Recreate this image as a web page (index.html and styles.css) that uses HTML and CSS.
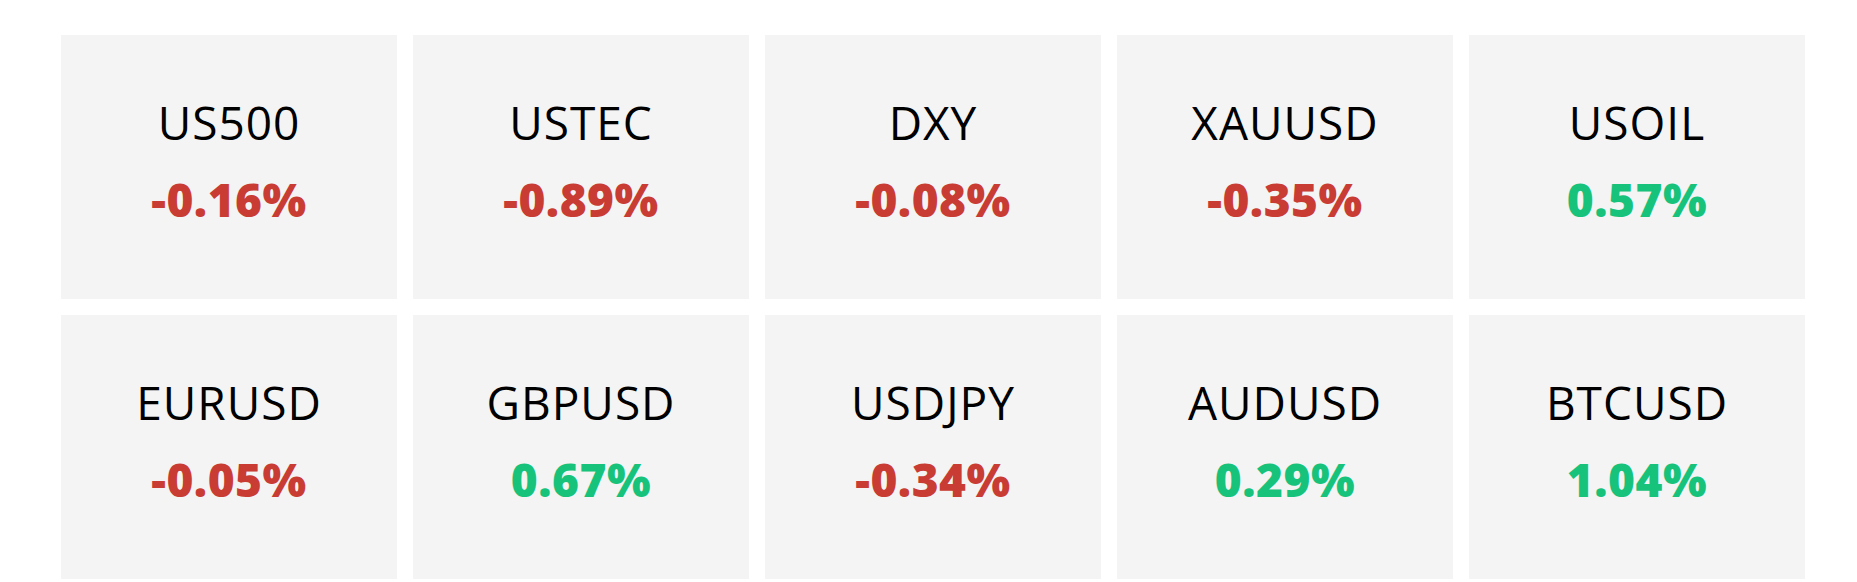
FILE: index.html
```html
<!DOCTYPE html>
<html lang="en">
<head>
<meta charset="utf-8">
<title>Markets</title>
<link rel="stylesheet" href="styles.css">
</head>
<body>
<main class="board">
  <div class="tile"><div class="sym">US500</div><div class="chg down">-0.16%</div></div>
  <div class="tile"><div class="sym">USTEC</div><div class="chg down">-0.89%</div></div>
  <div class="tile"><div class="sym">DXY</div><div class="chg down">-0.08%</div></div>
  <div class="tile"><div class="sym">XAUUSD</div><div class="chg down">-0.35%</div></div>
  <div class="tile"><div class="sym">USOIL</div><div class="chg up">0.57%</div></div>
  <div class="tile"><div class="sym">EURUSD</div><div class="chg down">-0.05%</div></div>
  <div class="tile"><div class="sym">GBPUSD</div><div class="chg up">0.67%</div></div>
  <div class="tile"><div class="sym">USDJPY</div><div class="chg down">-0.34%</div></div>
  <div class="tile"><div class="sym">AUDUSD</div><div class="chg up">0.29%</div></div>
  <div class="tile"><div class="sym">BTCUSD</div><div class="chg up">1.04%</div></div>
</main>
</body>
</html>
```
FILE: styles.css
```css
html, body {
  margin: 0;
  padding: 0;
  background: #ffffff;
}
body {
  font-family: "Open Sans", "Liberation Sans", sans-serif;
}
.board {
  display: grid;
  grid-template-columns: repeat(5, 336px);
  grid-auto-rows: 264px;
  gap: 16px;
  padding: 35px 52px 0 61px;
}
.tile {
  background: #f4f4f4;
  display: flex;
  flex-direction: column;
  align-items: center;
  padding-top: 53px;
  box-sizing: border-box;
}
.sym {
  font-size: 46px;
  line-height: 69px;
  font-weight: 400;
  letter-spacing: 1px;
  color: #000000;
}
.chg {
  margin-top: 8px;
  font-size: 46px;
  line-height: 69px;
  font-weight: 800;
  letter-spacing: 0.5px;
}
.down { color: #c93c34; }
.up { color: #17c37b; }
```
